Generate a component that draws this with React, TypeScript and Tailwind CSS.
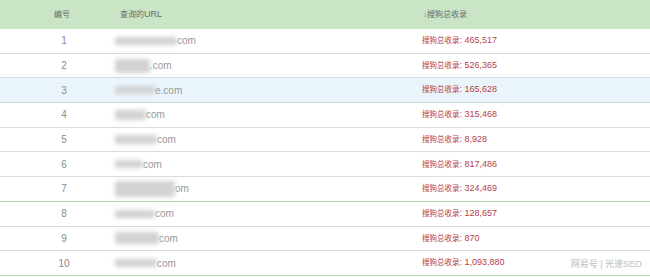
import React from 'react';

interface Row {
  id: number;
  blurW: number;
  blurH: number;
  tld: string;
  count: string;
  tone?: 'blue';
  greenBottom?: boolean;
}

const ROWS: Row[] = [
  { id: 1, blurW: 62, blurH: 8, tld: 'com', count: '465,517' },
  { id: 2, blurW: 35, blurH: 14, tld: '.com', count: '526,365' },
  { id: 3, blurW: 40, blurH: 8, tld: 'e.com', count: '165,628', tone: 'blue' },
  { id: 4, blurW: 31, blurH: 10, tld: 'com', count: '315,468' },
  { id: 5, blurW: 42, blurH: 9, tld: 'com', count: '8,928' },
  { id: 6, blurW: 28, blurH: 8, tld: 'com', count: '817,486' },
  { id: 7, blurW: 60, blurH: 16, tld: 'om', count: '324,469', greenBottom: true },
  { id: 8, blurW: 40, blurH: 8, tld: 'com', count: '128,657' },
  { id: 9, blurW: 44, blurH: 12, tld: 'com', count: '870' },
  { id: 10, blurW: 42, blurH: 8, tld: 'com', count: '1,093,880', greenBottom: true },
];

const FONT = "font-['Segoe_UI','Liberation_Sans','Noto_Sans_CJK_SC',sans-serif]";

export default function App() {
  return (
    <div className={`relative h-[277px] w-[650px] overflow-hidden bg-white ${FONT}`}>
      {/* header */}
      <div className="grid h-[29px] grid-cols-[128px_302px_1fr] items-center bg-[#c9e5c5] text-[#6b6b6b]">
        <div className="pl-[54px] text-[8px]">编号</div>
        <div className="-ml-[8px] text-[8px]">
          查询的<span className="text-[9px]">URL</span>
        </div>
        <div className="-ml-[7px] text-[8px]">↓搜狗总收录</div>
      </div>

      {ROWS.map((r) => (
        <div
          key={r.id}
          className={`grid h-[24.7px] grid-cols-[128px_302px_1fr] items-center border-b ${
            r.tone === 'blue' ? 'bg-[#eaf5fb] border-[#c3d9d3]' : 'bg-white'
          } ${r.greenBottom ? 'border-[#b8d8a6]' : r.tone === 'blue' ? '' : 'border-[#dcdcdc]'} ${
            r.id === 2 ? 'border-[#c3d9d3]' : ''
          }`}
        >
          <div className="text-center text-[10px] text-[#8a8a8a]">{r.id}</div>
          <div className="-ml-[13px] flex items-center text-[10px] text-[#999]">
            <div
              className="rounded-[2px] bg-[#d2d2d2] blur-[2px]"
              style={{ width: r.blurW, height: r.blurH }}
            />
            <span>{r.tld}</span>
          </div>
          <div className="-ml-[8px] text-[9px] text-[#b5404a]">
            <span className="text-[7.5px]">搜狗总收录</span>: {r.count}
          </div>
        </div>
      ))}

      <div className="absolute bottom-[6px] right-[8px] text-[9px] text-[#c4c4c4] [text-shadow:0_0_1px_#eee]">
        网易号 | 光速SEO
      </div>
    </div>
  );
}
